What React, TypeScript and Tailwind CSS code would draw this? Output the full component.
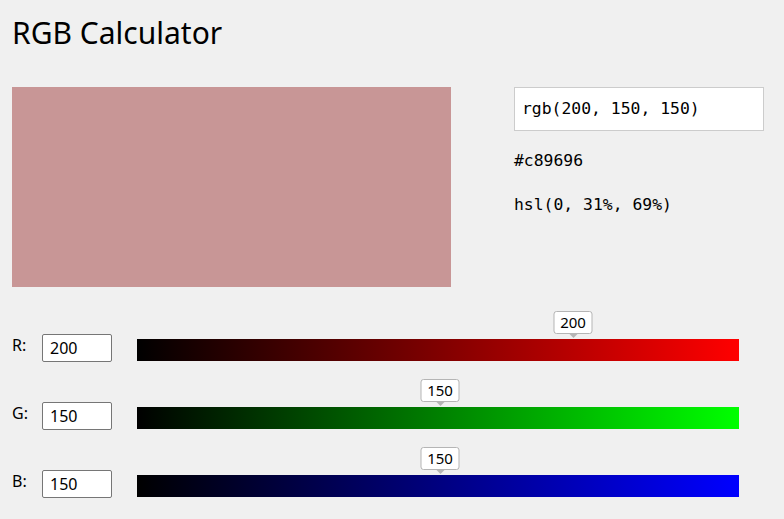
import React from 'react'

const rows = [
  {label: 'R:', value: 200, tip: 'left-[436px]', bar: 'bg-[linear-gradient(to_right,#000000,#ff0000)]'},
  {label: 'G:', value: 150, tip: 'left-[303px]', bar: 'bg-[linear-gradient(to_right,#000000,#00ff00)]'},
  {label: 'B:', value: 150, tip: 'left-[303px]', bar: 'bg-[linear-gradient(to_right,#000000,#0000ff)]'},
]

const mono = "font-['DejaVu_Sans_Mono','Liberation_Mono',monospace]"

export default function App() {
  return (
    <div className="w-[784px] h-[519px] overflow-hidden bg-[#f0f0f0] px-3 text-black font-['Noto_Sans',sans-serif]">
      <h1 className="pt-[13px] text-[30px] leading-[40px] font-normal">RGB Calculator</h1>

      <div className="mt-[34px] flex">
        <div className="w-[439px] h-[200px] bg-[#c89696]" />
        <div className={`ml-[63px] w-[250px] ${mono} text-[16.4px]`}>
          <div className="h-[44px] border border-[#cccccc] bg-white px-[7px] leading-[42px]">
            rgb(200, 150, 150)
          </div>
          <div className="mt-[18px] leading-[24px]">#c89696</div>
          <div className="mt-[20px] leading-[24px]">hsl(0, 31%, 69%)</div>
        </div>
      </div>

      <div className="mt-[47px]">
        {rows.map((r) => (
          <div key={r.label} className="flex items-start h-[68px]">
            <div className="w-[30px] text-[16px] leading-[23px]">{r.label}</div>
            <div className="w-[70px] h-[28px] border border-[#767676] rounded-[2px] bg-white pl-[7px] text-[16px] leading-[27px]">
              {r.value}
            </div>
            <div className={`relative ml-[25px] mt-[5px] w-[602px] h-[22px] ${r.bar}`}>
              <div className={`absolute bottom-[27px] ${r.tip} -translate-x-1/2 w-[39px] h-[23px] rounded-[3px] border border-[#b5b5b5] bg-white text-center text-[15px] leading-[21px]`}>
                {r.value}
                <div className="absolute top-full left-1/2 -translate-x-1/2 w-0 h-0 border-x-[5px] border-t-[5px] border-x-transparent border-t-[#b5b5b5]" />
              </div>
            </div>
          </div>
        ))}
      </div>
    </div>
  )
}
